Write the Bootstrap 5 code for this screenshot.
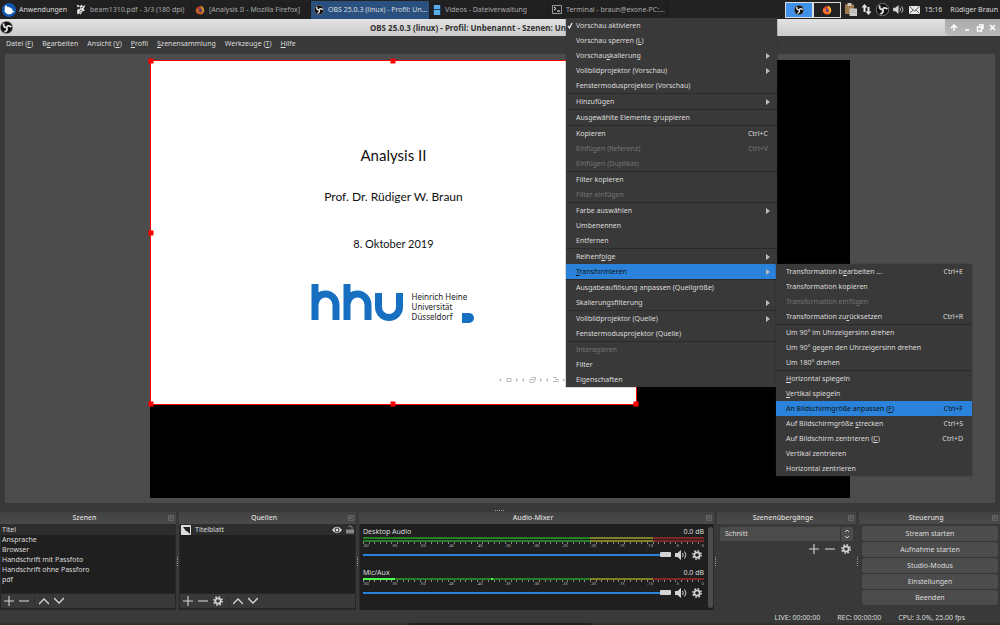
<!DOCTYPE html>
<html lang="de">
<head>
<meta charset="utf-8">
<meta name="viewport" content="width=device-width, initial-scale=1">
<title>OBS 25.0.3 (linux)</title>
<link href="https://cdn.jsdelivr.net/npm/bootstrap@5.3.0/dist/css/bootstrap.min.css" rel="stylesheet">
<style>
:root{--ink:#dcdcdc;--bg:#393939;--dark:#1f1f1f;--blue:#2a82da}
body{font:7px/10px "Noto Sans",sans-serif;color:var(--ink);background:var(--bg);overflow:hidden}
button,select{font:inherit;color:inherit;border:0;background:none;padding:0}
svg{display:block;flex:none}
u{text-underline-offset:1px}
/* panel */
.panel{height:19px;background:#222;color:#ddd}
.apps{width:7.3%;gap:3px;padding-left:2px}
.task{flex:0 0 11.9%;height:18px;padding:0 3px;gap:4px;color:#aaa;min-width:0;border-right:1px solid #1b1b1b;background:#202020}
.task.active{background:#29507f;color:#ddd}
.tray{padding-right:2px}
.desk{width:28px;height:16px;border:1px solid #ddd;background:#222}
.desk.active{background:#3f92ea}
/* window */
.titlebar{height:17px;background:linear-gradient(#e2e2e2,#cbcbcb);color:#333;font-size:8px;font-weight:700}
.title-box{width:56.6%}
.winctl{width:55px;background:linear-gradient(#aaa,#bbb);border-radius:0 0 0 5px}
.mbar{height:18px;padding:0 6px 3px;gap:9px}
.mbar a{color:var(--ink);text-decoration:none}
.preview{background:#4c4c4c;margin:0 5px;padding:6px 0 5px;min-height:0}
.stage{height:100%;aspect-ratio:16/10;background:#000}
.slide-src{width:69.6%;height:78.8%;background:#fff;border:1px solid red;color:#111;font-family:Lato,sans-serif}
.grip{position:absolute;width:5px;height:5px;background:red;transform:translate(-50%,-50%)}
.s-title{font-size:15px;line-height:20px;margin-top:84px}
.s-name{font-size:12px;line-height:16px;margin-top:24px}
.s-date{font-size:11px;line-height:16px;margin-top:31px}
.s-logo{margin-top:31px;gap:9px;padding-right:2px}
.s-uni{font:8px/10px "Noto Sans",sans-serif;color:#222;padding-top:9px}
.s-uni svg{margin-left:10px}
.s-nav{position:absolute;right:68px;bottom:20px}
/* menus */
.ctx{display:block;min-width:0;padding:0;border:0;border-radius:0;background:var(--bg);color:var(--ink);font-size:7px;line-height:15px;box-shadow:0 0 1px #222}
.ctx-main{top:18px;left:56.6%;width:211px}
.ctx-sub{left:calc(100% - 1px);width:196px}
.ctx .dropdown-item{display:flex;justify-content:space-between;align-items:center;height:15px;padding:0 9px 0 10px;color:inherit;position:relative;line-height:15px;font-size:7px}
.ctx .dropdown-item:hover{background:#444}
.ctx .dropdown-item.active{background:var(--blue);color:#111}
.ctx .dropdown-item:disabled{color:#757575}
.ctx .dropdown-divider{margin:0;border:0;height:1px;background:#2a2a2a;opacity:1}
.more::after{content:"";border:solid transparent;border-width:3px 0 3px 4px;border-left-color:#bbb;margin-right:-2px}
.tick{position:absolute;left:1px;top:4px}
/* docks */
.hsplit{height:9px;padding-bottom:1px}
.dots-h{width:10px;height:1px;background:repeating-linear-gradient(90deg,#999 0 1px,transparent 1px 2px)}
.docks{display:grid;grid-template-columns:176fr 177fr 355fr 139fr 141fr;gap:3px;height:98px}
.dock{position:relative;min-width:0}
.dock:not(:last-child)::after{content:"";position:absolute;right:-2px;top:45px;width:1px;height:10px;background:repeating-linear-gradient(#999 0 1px,transparent 1px 2px)}
.dock h2{font-size:7px;line-height:12px;height:12px;margin:0;padding-right:7px;background:linear-gradient(#424242,#4a4a4a);text-align:center;position:relative}
.pop{position:absolute;right:2px;top:3px}
.dbody{background:var(--dark);border:1px solid #2a2a2a;border-width:0 1px}
.dbody .list-group-item{background:none;border:0;border-radius:0;color:var(--ink);padding:0 1px;height:10px;line-height:10px}
.dbody .list-group-item.picked{background:#2d2d2d;height:11px;line-height:11px}
.tools{height:17px;border:1px solid #262626;border-width:1px 1px 2px;padding:0 3px;gap:5px}
.apart{border-left:1px solid #2c2c2c;padding-left:4px}
.mix{padding:3px 0 0 3px;gap:3px}
.scroll{width:5px;background:#4c4c4c;border-radius:3px;margin:0 0 2px}
.track-row{height:41px;padding-right:1px}
.chan{height:2px;background:linear-gradient(90deg,#267f26 66.7%,#7f7f26 66.7% 85%,#7f2626 85%)}
.chan.live{background:linear-gradient(90deg,#4cff4c 9.5%,transparent 9.5% 37.5%,#4cff4c 37.5% 38%,transparent 38%),linear-gradient(90deg,#267f26 66.7%,#7f7f26 66.7% 85%,#7f2626 85%)}
.meter{gap:1px}
.ticks{height:2px;background:repeating-linear-gradient(90deg,#888 0 1px,transparent 1px 1.665%)}
.scale{font-size:4px;line-height:4px;height:5px;color:#bbb}
.vol-row{padding-top:1px;padding-right:2px}
.vol{appearance:none;background:none;height:8px;min-width:0;margin:0}
.vol::-webkit-slider-runnable-track{height:2px;background:var(--blue)}
.vol::-webkit-slider-thumb{appearance:none;width:11px;height:5px;margin-top:-2px;background:#d4d4d4;border-radius:1px}
.trans-box{padding:3px 3px 0}
.trans{height:14px;background:linear-gradient(90deg,#4c4c4c calc(100% - 13px),#333 calc(100% - 13px) calc(100% - 12px),#4c4c4c calc(100% - 12px));border-radius:2px;appearance:none;width:100%;padding-left:5px;line-height:14px}
.trans-tools{gap:6px;padding:3px 2px 0 0}
.ctls{padding:2px 2px 0 3px;gap:1px}
.ctl{background:#4c4c4c;border-radius:2px;height:15px;box-shadow:0 0 1px #2a2a2a}
.status{height:13px;gap:17px;padding:3px 35px 0 0}
.foot{height:2px;background:linear-gradient(90deg,#323232 40.9%,#202020 40.9% 59.1%,#323232 59.1%)}
</style>
</head>
<body class="vh-100 d-flex flex-column position-relative">
<svg width="0" height="0" class="position-absolute" aria-hidden="true">
<symbol id="obs" viewBox="0 0 24 24"><circle cx="12" cy="12" r="11.5" fill="#111" stroke="#bbb"/><g fill="none" stroke="#e4e4e4" stroke-width="3.400"><path d="M12 12C8 12.500 5.500 9 7 4.500"/><path d="M12 12C8 12.500 5.500 9 7 4.500" transform="rotate(120 12 12)"/><path d="M12 12C8 12.500 5.500 9 7 4.500" transform="rotate(240 12 12)"/></g></symbol>
<symbol id="fox" viewBox="0 0 24 24"><circle cx="12" cy="13" r="10" fill="#e8402a"/><path d="M14 1c7 4 9 9 8 14-1 4-5 8-10 8 6-3 7-8 4-12-2-3-3-6-2-10z" fill="#ffb52e"/><circle cx="11" cy="13" r="5" fill="#6b3fa0"/><path d="M2 12c2-4 4-4 7-3l3 2c-4 0-4 3-2 5 2 2 5 1 6-1 0 5-5 7-9 5-3-1-5-4-5-8z" fill="#ff7a1c"/></symbol>
<symbol id="plus" viewBox="0 0 10 10"><path d="M5 0v10M0 5h10" stroke="#d4d4d4" stroke-width="1.1"/></symbol>
<symbol id="minus" viewBox="0 0 10 10"><path d="M0 5h10" stroke="#d4d4d4" stroke-width="1.1"/></symbol>
<symbol id="up" viewBox="0 0 10 10"><path d="M0 8l5-5 5 5" fill="none" stroke="#d4d4d4" stroke-width="1.4"/></symbol>
<symbol id="down" viewBox="0 0 10 10"><path d="M0 2l5 5 5-5" fill="none" stroke="#d4d4d4" stroke-width="1.4"/></symbol>
<symbol id="gear" viewBox="0 0 20 20"><circle cx="10" cy="10" r="8.4" fill="none" stroke="#d4d4d4" stroke-width="3" stroke-dasharray="3.3 3.3"/><circle cx="10" cy="10" r="5.4" fill="none" stroke="#d4d4d4" stroke-width="3.6"/></symbol>
<symbol id="spk" viewBox="0 0 26 20"><path d="M0 6h5l7-6v20l-7-6H0z" fill="#d4d4d4"/><path d="M15 6q3 4 0 8M19 3q6 7 0 14" fill="none" stroke="#d4d4d4" stroke-width="2"/></symbol>
<symbol id="popi" viewBox="0 0 12 12"><path d="M1 1h10v10H1zM3 3l6 6M9 3L3 9M6 1v3M1 6h3" fill="none" stroke="#808080"/></symbol>
</svg>

<header class="panel d-flex align-items-center flex-shrink-0">
<button class="apps d-flex align-items-center"><svg width="14" height="14" viewBox="0 0 28 28"><circle cx="14" cy="14" r="14" fill="#1158b5"/><path d="M5 9l3-5 3 4c6-1 10 4 11 8l4 2-5 1c-2 4-8 5-12 2-4-2-5-6-3-9z" fill="#fff"/></svg>Anwendungen</button>
<button class="task d-flex align-items-center"><svg width="10" height="11" viewBox="0 0 20 22"><path d="M1 1l7 3 4-3 1 4 6-3-4 8 3 3-6 2-2 6-4-2-3 2-1-8 3-3z" fill="#eee"/><path d="M5 6h3v3H5zM10 8l4-2M7 12l5 1M8 15v4" stroke="#222" stroke-width="1.5"/></svg><span class="text-nowrap">beam1310.pdf - 3/3 (180 dpi)</span></button>
<button class="task d-flex align-items-center"><svg width="10" height="10" opacity=".75"><use href="#fox"/></svg><span class="text-nowrap">[Analysis II - Mozilla Firefox]</span></button>
<button class="task active d-flex align-items-center"><svg width="10" height="10"><use href="#obs"/></svg><span class="text-nowrap">OBS 25.0.3 (linux) - Profil: Un...</span></button>
<button class="task d-flex align-items-center"><svg width="8" height="10" viewBox="0 0 8 10"><path d="M0 0h8v10H0z" fill="#1d3c5c"/><path d="M1 0h6v4H1zM1 5h6v5H1z" fill="#5aaeea"/></svg><span class="text-nowrap">Videos - Dateiverwaltung</span></button>
<button class="task d-flex align-items-center"><svg width="10" height="9" viewBox="0 0 10 9"><path d="M.5.5h9v8h-9z" fill="#222" stroke="#999"/><path d="M2 2l2 1.500-2 1.500M5 6h3" fill="none" stroke="#eee"/></svg><span class="text-nowrap">Terminal - braun@exone-PC:...</span></button>
<div class="tray ms-auto d-flex align-items-center">
<button class="desk active d-flex align-items-center justify-content-center" aria-label="Desktop 1"><svg width="10" height="10"><use href="#obs"/></svg></button>
<button class="desk d-flex align-items-center justify-content-center" aria-label="Desktop 2"><svg width="10" height="10"><use href="#fox"/></svg></button>
<svg class="ms-1" width="12" height="13" viewBox="0 0 24 26"><path d="M0 3h18v19H0z" fill="#9c7a4c"/><path d="M5 0h8v6H5z" fill="#d0c8b8"/><path d="M9 11h15v15H9z" fill="#ccc"/><path d="M11 15h10M11 19h10" stroke="#999"/></svg>
<svg class="ms-1" width="11" height="11" viewBox="0 0 22 22"><path d="M5 16V7H1l6-7 6 7H9v9zM13 6v9H9l6 7 6-7h-4V6z" fill="#e4e4e4"/></svg>
<svg class="ms-1" width="13" height="13"><use href="#obs"/></svg>
<svg class="ms-1" width="12" height="9"><use href="#spk"/></svg>
<svg class="ms-1" width="11" height="8" viewBox="0 0 22 16"><path d="M0 0h22v16H0z" fill="#e8e8e8"/><path d="M1 1l10 9L21 1M1 15l7-7M21 15l-7-7" fill="none" stroke="#333" stroke-width="1.500"/></svg>
<span class="ms-1">15:16</span><span class="ms-2 text-nowrap">Rüdiger Braun</span>
</div>
</header>

<div class="titlebar d-flex align-items-center flex-shrink-0">
<div class="title-box d-flex align-items-center justify-content-between"><svg width="13" height="13"><use href="#obs"/></svg><span class="text-nowrap">OBS 25.0.3 (linux) - Profil: Unbenannt - Szenen: Un</span></div>
<svg class="ms-auto winctl" height="17" viewBox="0 0 55 17"><g fill="none" stroke="#fff" stroke-width="1.500"><path d="M9 12V7M6 9l3-3 3 3M20 11h4M32.500 8h4v4h-4zM34 6h4v4M45 6l5 5M50 6l-5 5"/></g></svg>
</div>

<nav class="mbar d-flex align-items-center flex-shrink-0">
<a href="#">Datei (<u>F</u>)</a><a href="#">B<u>e</u>arbeiten</a><a href="#">Ansicht (<u>V</u>)</a><a href="#"><u>P</u>rofil</a><a href="#"><u>S</u>zenensammlung</a><a href="#">Werkzeuge (<u>T</u>)</a><a href="#"><u>H</u>ilfe</a>
</nav>

<main class="preview flex-fill d-flex justify-content-center">
<div class="stage">
<div class="slide-src position-relative d-flex flex-column align-items-center">
<div class="s-title">Analysis II</div>
<div class="s-name">Prof. Dr. Rüdiger W. Braun</div>
<div class="s-date">8. Oktober 2019</div>
<div class="s-logo d-flex">
<svg width="92" height="38" viewBox="0 0 92 38"><path d="M4 1v36M4 37V22a10.500 11 0 0 1 21 0v15M36 1v36M36 37V22a10.500 11 0 0 1 21 0v15M67.500 10v14a10.500 10.500 0 0 0 21 0V10" fill="none" stroke="#176fc1" stroke-width="7"/></svg>
<div class="s-uni">Heinrich Heine<br>Universität<br><span class="d-flex">Düsseldorf<svg width="12" height="11" viewBox="0 0 12 11"><path d="M0 1h7a5 5 0 0 1 0 10H0z" fill="#176fc1"/></svg></span></div>
</div>
<svg class="s-nav" width="80" height="8" viewBox="0 0 80 8"><g fill="none" stroke="#bbb"><path d="M19 2.500h4v3h-4zM42 3.500h4v3h-4zM43.500 1.500h4v3M65 1.500h4M67 3.500h4M65 5.500h6"/></g><path d="M13 2v4l-2-2zM28 2v4l2-2zM36 2v4l-2-2zM52 2v4l2-2zM60 2v4l-2-2zM75 2v4l2-2z" fill="#bbb"/></svg>
<i class="grip top-0 start-0"></i><i class="grip top-0 start-50"></i><i class="grip top-50 start-0"></i><i class="grip top-100 start-0"></i><i class="grip top-100 start-50"></i><i class="grip top-100 start-100"></i>
</div>
</div>
</main>

<div class="hsplit d-flex justify-content-center align-items-end flex-shrink-0"><div class="dots-h"></div></div>

<div class="docks flex-shrink-0">
<section class="dock d-flex flex-column"><h2>Szenen<svg class="pop" width="6" height="6"><use href="#popi"/></svg></h2>
<div class="dbody flex-fill"><ul class="list-group"><li class="list-group-item picked">Titel</li><li class="list-group-item">Ansprache</li><li class="list-group-item">Browser</li><li class="list-group-item">Handschrift mit Passfoto</li><li class="list-group-item">Handschrift ohne Passforo</li><li class="list-group-item">pdf</li></ul></div>
<div class="tools d-flex align-items-center"><button aria-label="Hinzufügen"><svg width="10" height="10"><use href="#plus"/></svg></button><button aria-label="Entfernen"><svg width="10" height="10"><use href="#minus"/></svg></button><button class="apart" aria-label="Hoch"><svg width="10" height="10"><use href="#up"/></svg></button><button aria-label="Runter"><svg width="10" height="10"><use href="#down"/></svg></button></div>
</section>
<section class="dock d-flex flex-column"><h2>Quellen<svg class="pop" width="6" height="6"><use href="#popi"/></svg></h2>
<div class="dbody flex-fill"><ul class="list-group"><li class="list-group-item picked d-flex align-items-center"><svg width="10" height="10" viewBox="0 0 10 10"><path d="M.5.5h9v9h-9z" fill="#ddd" stroke="#ddd"/><path d="M2 2h7v7L6.500 6.500 5 6z" fill="#222"/></svg><span class="ms-1">Titelblatt</span><svg class="ms-auto" width="10" height="8" viewBox="0 0 20 16"><path d="M0 8Q10-5 20 8 10 21 0 8z" fill="#ddd"/><circle cx="10" cy="8" r="4" fill="none" stroke="#222" stroke-width="2"/></svg><svg class="ms-1" width="8" height="9" viewBox="0 0 16 18"><path d="M0 9h16v8H0z" fill="#888"/><path d="M4 4q4-5 8 0v5" fill="none" stroke="#888" stroke-width="2"/></svg></li></ul></div>
<div class="tools d-flex align-items-center"><button aria-label="Hinzufügen"><svg width="10" height="10"><use href="#plus"/></svg></button><button aria-label="Entfernen"><svg width="10" height="10"><use href="#minus"/></svg></button><button aria-label="Eigenschaften"><svg width="10" height="10"><use href="#gear"/></svg></button><button class="apart" aria-label="Hoch"><svg width="10" height="10"><use href="#up"/></svg></button><button aria-label="Runter"><svg width="10" height="10"><use href="#down"/></svg></button></div>
</section>
<section class="dock d-flex flex-column"><h2>Audio-Mixer<svg class="pop" width="6" height="6"><use href="#popi"/></svg></h2>
<div class="dbody mix flex-fill d-flex">
<div class="flex-fill" id="tracks"></div><div class="scroll"></div>
</div></section>
<section class="dock"><h2>Szenenübergänge<svg class="pop" width="6" height="6"><use href="#popi"/></svg></h2>
<div class="trans-box"><div class="position-relative"><select class="trans d-block" aria-label="Übergang"><option>Schnitt</option></select><svg class="position-absolute top-0 end-0" width="12" height="14" viewBox="0 0 12 14"><path d="M4 5l2-2 2 2M4 9l2 2 2-2" fill="none" stroke="#ccc"/></svg></div>
<div class="trans-tools d-flex justify-content-end"><button aria-label="Hinzufügen"><svg width="10" height="10"><use href="#plus"/></svg></button><button aria-label="Entfernen"><svg width="10" height="10"><use href="#minus"/></svg></button><button aria-label="Eigenschaften"><svg width="10" height="10"><use href="#gear"/></svg></button></div></div>
</section>
<section class="dock"><h2>Steuerung<svg class="pop" width="6" height="6"><use href="#popi"/></svg></h2>
<div class="ctls d-grid"><button class="ctl">Stream starten</button><button class="ctl">Aufnahme starten</button><button class="ctl">Studio-Modus</button><button class="ctl">Einstellungen</button><button class="ctl">Beenden</button></div>
</section>
</div>
<footer class="status d-flex justify-content-end align-items-center flex-shrink-0"><span>LIVE: 00:00:00</span><span>REC: 00:00:00</span><span>CPU: 3.0%, 25.00 fps</span></footer>
<div class="foot flex-shrink-0"></div>

<ul class="dropdown-menu show ctx ctx-main position-absolute">
<li><button class="dropdown-item"><svg class="tick" width="6" height="7" viewBox="0 0 6 7"><path d="M1 4l1.500 2L5 1" fill="none" stroke="#eee" stroke-width="1.300"/></svg>Vorschau aktivieren</button></li>
<li><button class="dropdown-item"><span>Vorschau sperren (<u>L</u>)</span></button></li>
<li><button class="dropdown-item more"><span>Vorschau<u>s</u>kalierung</span></button></li>
<li><button class="dropdown-item more">Vollbildprojektor (Vorschau)</button></li>
<li><button class="dropdown-item">Fenstermodusprojektor (Vorschau)</button></li>
<li class="dropdown-divider"></li>
<li><button class="dropdown-item more">Hinzufügen</button></li>
<li class="dropdown-divider"></li>
<li><button class="dropdown-item">Ausgewählte Elemente gruppieren</button></li>
<li class="dropdown-divider"></li>
<li><button class="dropdown-item">Kopieren<span>Ctrl+C</span></button></li>
<li><button class="dropdown-item" disabled>Einfügen (Referenz)<span>Ctrl+V</span></button></li>
<li><button class="dropdown-item" disabled>Einfügen (Duplikat)</button></li>
<li class="dropdown-divider"></li>
<li><button class="dropdown-item">Filter kopieren</button></li>
<li><button class="dropdown-item" disabled>Filter einfügen</button></li>
<li class="dropdown-divider"></li>
<li><button class="dropdown-item more">Farbe auswählen</button></li>
<li><button class="dropdown-item">Umbenennen</button></li>
<li><button class="dropdown-item">Entfernen</button></li>
<li class="dropdown-divider"></li>
<li><button class="dropdown-item more"><span>Reihenf<u>o</u>lge</span></button></li>
<li class="position-relative"><button class="dropdown-item more active"><span><u>T</u>ransformieren</span></button>
<ul class="dropdown-menu show ctx ctx-sub position-absolute top-0">
<li><button class="dropdown-item"><span>Transformation b<u>e</u>arbeiten ...</span><span>Ctrl+E</span></button></li>
<li><button class="dropdown-item">Transformation kopieren</button></li>
<li><button class="dropdown-item" disabled>Transformation einfügen</button></li>
<li><button class="dropdown-item"><span>Transformation zu<u>r</u>ücksetzen</span><span>Ctrl+R</span></button></li>
<li class="dropdown-divider"></li>
<li><button class="dropdown-item">Um 90° im Uhrzeigersinn drehen</button></li>
<li><button class="dropdown-item">Um 90° gegen den Uhrzeigersinn drehen</button></li>
<li><button class="dropdown-item">Um 180° drehen</button></li>
<li class="dropdown-divider"></li>
<li><button class="dropdown-item"><span><u>H</u>orizontal spiegeln</span></button></li>
<li><button class="dropdown-item"><span><u>V</u>ertikal spiegeln</span></button></li>
<li><button class="dropdown-item active"><span>An Bildschirmgröße anpassen (<u>F</u>)</span><span>Ctrl+F</span></button></li>
<li><button class="dropdown-item"><span>Auf Bildschirmgröße <u>s</u>trecken</span><span>Ctrl+S</span></button></li>
<li><button class="dropdown-item"><span>Auf Bildschirm zentrieren (<u>C</u>)</span><span>Ctrl+D</span></button></li>
<li><button class="dropdown-item">Vertikal zentrieren</button></li>
<li><button class="dropdown-item">Horizontal zentrieren</button></li>
</ul></li>
<li class="dropdown-divider"></li>
<li><button class="dropdown-item">Ausgabeauflösung anpassen (Quellgröße)</button></li>
<li><button class="dropdown-item more">Skalierungsfilterung</button></li>
<li class="dropdown-divider"></li>
<li><button class="dropdown-item more">Vollbildprojektor (Quelle)</button></li>
<li><button class="dropdown-item">Fenstermodusprojektor (Quelle)</button></li>
<li class="dropdown-divider"></li>
<li><button class="dropdown-item" disabled>Interagieren</button></li>
<li><button class="dropdown-item">Filter</button></li>
<li><button class="dropdown-item">Eigenschaften</button></li>
</ul>
<script>
// One strip per audio channel: name, level meter, dB scale, volume slider
const marks=[-60,-55,-50,-45,-40,-35,-30,-25,-20,-15,-10,-5,0];
document.getElementById('tracks').innerHTML=[['Desktop Audio',['','']],['Mic/Aux',['live']]].map(([name,bars],i)=>`
<div class="track-row">
<div class="d-flex justify-content-between"><label for="v${i}">${name}</label><span>0.0 dB</span></div>
<div class="meter d-flex flex-column">${bars.map(b=>`<div class="chan ${b}"></div>`).join('')}</div>
<div><div class="ticks"></div><div class="scale d-flex justify-content-between">${marks.map(m=>`<span>${m}</span>`).join('')}</div></div>
<div class="vol-row d-flex align-items-center"><input class="vol flex-fill" id="v${i}" type="range" value="100"><svg class="ms-1" width="13" height="10"><use href="#spk"/></svg><button class="ms-1" aria-label="Einstellungen"><svg width="10" height="10"><use href="#gear"/></svg></button></div>
</div>`).join('');
</script>
<script src="https://cdn.jsdelivr.net/npm/bootstrap@5.3.0/dist/js/bootstrap.bundle.min.js"></script>
</body>
</html>
